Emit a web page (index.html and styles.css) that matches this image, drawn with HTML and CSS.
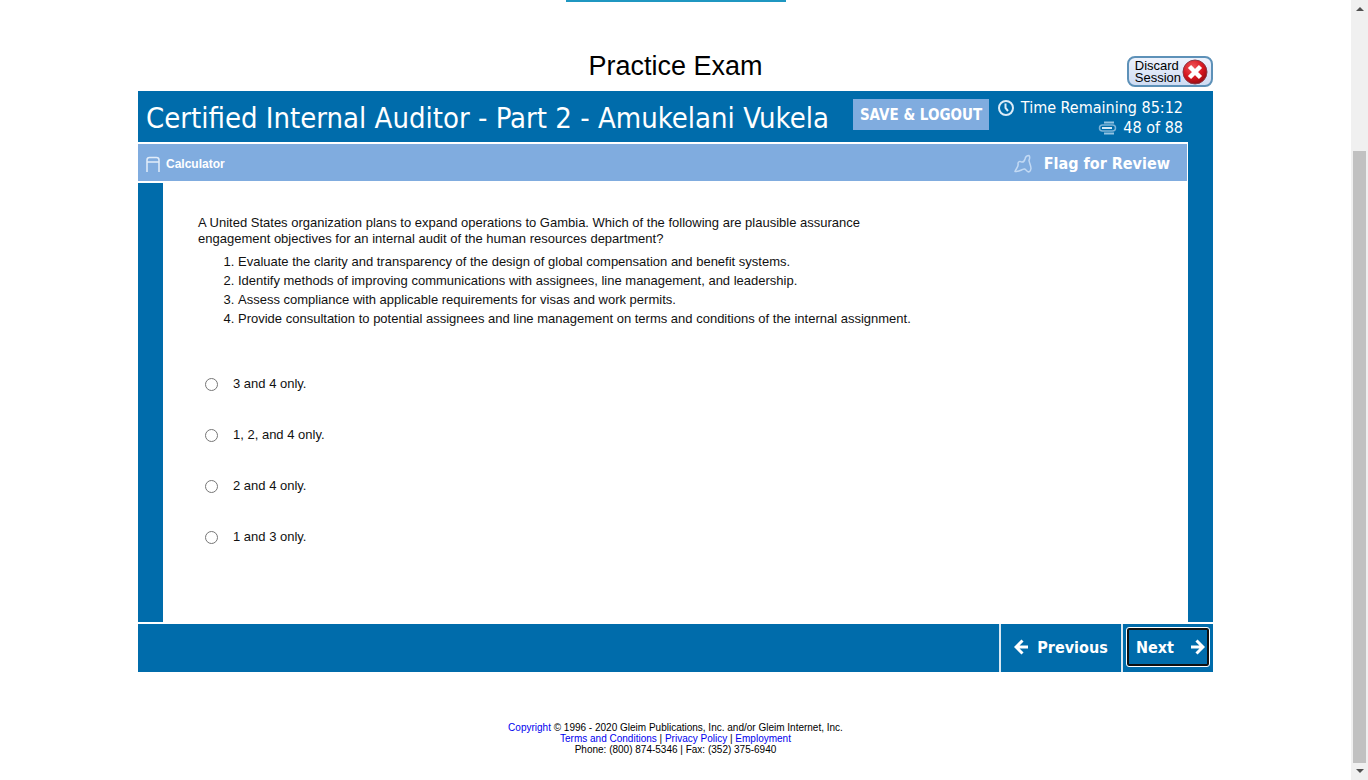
FILE: index.html
```html
<!DOCTYPE html>
<html lang="en">
<head>
<meta charset="utf-8">
<title>Practice Exam</title>
<link rel="stylesheet" href="styles.css">
</head>
<body>
<div class="page">
  <div class="tab-edge"></div>
  <header class="page-header">
    <h1>Practice Exam</h1>
    <button class="discard" type="button">
      <span class="discard-label"><span>Discard</span><span>Session</span></span>
      <svg width="26" height="26" viewBox="0 0 26 26" aria-hidden="true">
        <defs><radialGradient id="red" cx="40%" cy="30%" r="75%"><stop offset="0" stop-color="#f0565a"/><stop offset=".6" stop-color="#d5141d"/><stop offset="1" stop-color="#8d0c12"/></radialGradient></defs>
        <circle cx="13" cy="13" r="12" fill="url(#red)" stroke="#8b3a48"/>
        <path d="M7.500 7.500l11 11M18.500 7.500l-11 11" stroke="#fff" stroke-width="4.500"/>
      </svg>
    </button>
  </header>

  <main class="exam">
    <div class="title-bar">
      <h2>Certified Internal Auditor - Part 2 - Amukelani Vukela</h2>
      <button class="logout" type="button">SAVE &amp; LOGOUT</button>
      <div class="status">
        <div class="status-row">
          <svg width="18" height="18" viewBox="0 0 18 18" fill="none" stroke="#dcecf8" stroke-width="2" aria-hidden="true"><circle cx="9" cy="9" r="7"/><path d="M8.500 4.500V9l2.500 3"/></svg>
          <span>Time Remaining 85:12</span>
        </div>
        <div class="status-row">
          <svg width="19" height="14" viewBox="0 0 19 14" fill="none" aria-hidden="true"><path d="M6 1.500h10M6 12.500h10" stroke="#93c3e2" stroke-width="2"/><rect x="1.500" y="4" width="16" height="6" rx="3" stroke="#7db4d8" stroke-width="1.500"/><path d="M4 7h10" stroke="#d6eaf7" stroke-width="2"/></svg>
          <span>48 of 88</span>
        </div>
      </div>
    </div>
    <div class="toolbar">
      <button class="calculator" type="button">
        <svg width="14" height="16" viewBox="0 0 14 16" fill="none" stroke="#e2edfa" stroke-width="1.500" aria-hidden="true"><path d="M1 16V4q0-2.500 2.500-2.500h7Q13 1.500 13 4v12M1 6h12"/></svg>
        <span>Calculator</span>
      </button>
      <button class="flag" type="button">
        <svg width="18" height="20" viewBox="0 0 18 20" fill="none" stroke="#c3daf4" stroke-width="1.500" stroke-linejoin="round" aria-hidden="true"><path d="M1 17.500C2 14 5 13 4 9.500c0-2 2-2.500 3.500-1.500 2.500.5 3-1 3.500-3 .5-2.500 2-3.500 4-3.500 1.500 1.500.5 3 0 5 .5 3 2 5 2 8-.5 3-2 4-3.500 3-2-1.500-2-3-3.500-2.500-3 .5-3 2.500-9 2.500z"/></svg>
        <span>Flag for Review</span>
      </button>
    </div>
    <div class="rail rail-left"></div>
    <section class="question">
      <p>A United States organization plans to expand operations to Gambia. Which of the following are plausible assurance<br>engagement objectives for an internal audit of the human resources department?</p>
      <ol>
        <li>Evaluate the clarity and transparency of the design of global compensation and benefit systems.</li>
        <li>Identify methods of improving communications with assignees, line management, and leadership.</li>
        <li>Assess compliance with applicable requirements for visas and work permits.</li>
        <li>Provide consultation to potential assignees and line management on terms and conditions of the internal assignment.</li>
      </ol>
      <div class="answers">
        <label><input type="radio" name="answer"><span>3 and 4 only.</span></label>
        <label><input type="radio" name="answer"><span>1, 2, and 4 only.</span></label>
        <label><input type="radio" name="answer"><span>2 and 4 only.</span></label>
        <label><input type="radio" name="answer"><span>1 and 3 only.</span></label>
      </div>
    </section>
    <div class="rail rail-right"></div>
    <nav class="nav-bar">
      <div class="nav-cell">
        <button type="button" class="nav-button">
          <svg width="14" height="16" viewBox="0 0 14 16" fill="none" stroke="#fff" stroke-width="3" aria-hidden="true"><path d="M8.500 1.500L2 8l6.500 6.500M2 8h12"/></svg>
          <span>Previous</span>
        </button>
      </div>
      <div class="nav-cell nav-cell-next">
        <button type="button" class="nav-button nav-next">
          <span>Next</span>
          <svg width="14" height="16" viewBox="0 0 14 16" fill="none" stroke="#fff" stroke-width="3" aria-hidden="true"><path d="M5.500 1.500L12 8l-6.500 6.500M12 8H0"/></svg>
        </button>
      </div>
    </nav>
  </main>

  <footer class="page-footer">
    <div><a href="#">Copyright</a> © 1996 - 2020 Gleim Publications, Inc. and/or Gleim Internet, Inc.</div>
    <div><a href="#">Terms and Conditions</a> | <a href="#">Privacy Policy</a> | <a href="#">Employment</a></div>
    <div>Phone: (800) 874-5346 | Fax: (352) 375-6940</div>
  </footer>
</div>
<div class="scrollbar" aria-hidden="true">
  <svg width="17" height="17" viewBox="0 0 17 17"><path d="M5 11h8L9 7z" fill="#505050"/></svg>
  <div class="track"><div class="thumb"></div></div>
  <svg width="17" height="17" viewBox="0 0 17 17"><path d="M5 6h8L9 10z" fill="#505050"/></svg>
</div>
</body>
</html>
```

FILE: styles.css
```css
* { box-sizing: border-box; }
body {
  margin: 0;
  display: flex;
  height: 100vh;
  overflow: hidden;
  background: #fff;
  color: #111;
  font-family: "Liberation Sans", Arial, sans-serif;
}
button {
  border: 0;
  padding: 0;
  background: none;
  color: inherit;
  font: inherit;
}
svg { display: block; flex: none; }
.page { flex: 1; min-width: 0; }
.tab-edge {
  width: 220px;
  height: 2px;
  margin: 0 auto;
  background: #1f97c1;
}
.page-header {
  display: grid;
  grid-template-columns: 1fr auto 1fr;
  align-items: end;
  max-width: 1075px;
  height: 89px;
  margin: 0 auto;
  padding-bottom: 4px;
}
h1 {
  grid-column: 2;
  margin: 0 0 5px;
  color: #000;
  font-size: 27px;
  font-weight: 400;
  line-height: 32px;
}
.discard {
  justify-self: end;
  display: flex;
  align-items: center;
  gap: 1px;
  height: 31px;
  padding: 0 3px 0 6px;
  border: 2px solid #5d91b8;
  border-radius: 8px;
  background: linear-gradient(#edf2fc, #cfdcf3);
  color: #000;
  font-size: 13px;
  line-height: 12px;
  text-align: left;
}
.discard-label { display: grid; }
.exam {
  display: grid;
  grid-template-columns: 25px 1fr 25px;
  max-width: 1075px;
  margin: 0 auto;
}
.title-bar,
.flag,
.nav-bar {
  font-family: Tahoma, "DejaVu Sans Condensed", "Noto Sans", sans-serif;
}
.title-bar {
  grid-column: 1 / 3;
  display: flex;
  align-items: center;
  height: 51px;
  padding: 3px 5px 0 8px;
  background: #006cab;
  color: #fff;
}
h2 {
  flex: 1;
  margin: 0;
  font-size: 29px;
  font-weight: 400;
  line-height: 36px;
  white-space: nowrap;
}
.logout {
  width: 136px;
  height: 31px;
  margin: 0 10px 7px 0;
  background: #80acdf;
  font-size: 15px;
  font-weight: 700;
  white-space: nowrap;
}
.status {
  width: 184px;
  font-size: 16px;
  line-height: 20px;
  white-space: nowrap;
}
.status-row {
  display: flex;
  align-items: center;
  justify-content: flex-end;
  gap: 6px;
}
.toolbar {
  grid-column: 1 / 3;
  display: flex;
  align-items: center;
  justify-content: space-between;
  height: 37px;
  margin: 2px 1px 2px 0;
  padding: 2px 17px 0 8px;
  background: #80acdf;
  color: #fff;
}
.calculator {
  display: flex;
  align-items: center;
  gap: 6px;
  font-size: 12px;
  font-weight: 700;
}
.flag {
  display: flex;
  align-items: center;
  gap: 12px;
  font-size: 16px;
  font-weight: 700;
}
.rail { background: #006cab; }
.rail-left { grid-column: 1; grid-row: 3; }
.rail-right { grid-column: 3; grid-row: 1 / 4; }
.question {
  grid-column: 2;
  grid-row: 3;
  min-height: 439px;
  padding: 32px 35px 0;
  font-size: 13px;
  line-height: 16px;
}
.question p { margin: 0; }
.question ol {
  margin: 5px 0 0;
  padding-left: 40px;
}
.question li { line-height: 19px; }
.answers {
  display: grid;
  gap: 31px;
  margin-top: 46px;
}
.answers label {
  display: flex;
  align-items: center;
  gap: 15px;
  line-height: 20px;
}
.answers input {
  width: 13px;
  height: 13px;
  margin: 0 0 0 7px;
}
.nav-bar {
  grid-column: 1 / 4;
  display: flex;
  justify-content: flex-end;
  height: 48px;
  margin-top: 2px;
  background: #006cab;
  color: #fff;
  font-size: 16px;
  font-weight: 700;
}
.nav-cell {
  display: flex;
  align-items: center;
  justify-content: center;
  width: 122px;
  padding-bottom: 2px;
  border-left: 2px solid #d9e8f2;
}
.nav-cell-next { width: 92px; }
.nav-button {
  display: flex;
  align-items: center;
  gap: 9px;
  height: 38px;
}
.nav-next {
  justify-content: space-between;
  width: 82px;
  padding: 0 2px 0 7px;
  outline: 1px solid #fff;
  border: 2px solid #101010;
  border-radius: 2px;
}
.page-footer {
  padding-top: 50px;
  color: #000;
  font-size: 10px;
  line-height: 11px;
  text-align: center;
}
.page-footer a { color: #00e; text-decoration: none; }
.scrollbar {
  display: flex;
  flex-direction: column;
  width: 17px;
  background: #f0f0f0;
}
.track {
  flex: 1;
  display: flex;
  align-items: flex-end;
  padding: 0 2px;
}
.thumb {
  width: 100%;
  height: 82%;
  background: #c1c1c1;
}
```
